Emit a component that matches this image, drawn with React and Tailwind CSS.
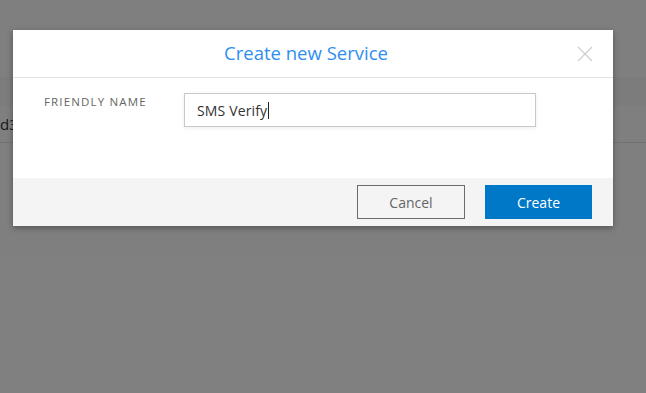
import React from 'react';

const App = () => {
  return (
    <div className="relative w-[646px] h-[393px] overflow-hidden bg-white" style={{ fontFamily: '"Open Sans", "Noto Sans", sans-serif' }}>
      {/* page behind the overlay */}
      <div className="flex flex-col">
        <div className="h-[77px]" />
        <div className="h-[29px] bg-[#f9f9f9]" />
        <div className="h-[37px] border-b border-[#e4e4e4] flex items-center">
          <span className="text-[15px] text-[#333]">d3</span>
        </div>
      </div>

      {/* overlay + dialog */}
      <div className="absolute inset-0 bg-black/50 pt-[30px] pl-[13px]">
        <div className="w-[600px] bg-white shadow-[0_2px_6px_rgba(0,0,0,0.35)]">
          <div className="relative h-[48px] border-b border-[#e3e3e3] flex items-center justify-center">
            <h2 className="text-[18.5px] text-[#2e8ef0] leading-none -ml-[14px]">Create new Service</h2>
            <button className="absolute right-[20px] top-[16px] w-[16px] h-[16px] text-[#cfcfcf]">
              <svg viewBox="0 0 16 16" width="16" height="16" fill="none" stroke="currentColor" strokeWidth="1.3">
                <path d="M1 1 L15 15 M15 1 L1 15" />
              </svg>
            </button>
          </div>
          <div className="h-[100px] flex items-start pt-[15px] pl-[31px]">
            <label className="w-[140px] text-[11.5px] tracking-[0.1em] text-[#666] uppercase">Friendly Name</label>
            <div className="w-[352px] h-[34px] border border-[#c8c8c8] shadow-[0_1px_4px_rgba(0,0,0,0.08)] flex items-center pl-[12px]">
              <span className="text-[14px] tracking-[0.01em] text-[#333]">SMS Verify</span>
              <span className="w-px h-[17px] bg-[#222] ml-[1px]" />
            </div>
          </div>
          <div className="h-[48px] bg-[#f4f4f4] flex justify-end items-start pt-[7px] pr-[21px] gap-[20px]">
            <button className="w-[108px] h-[34px] border border-[#6b6b6b] text-[14px] text-[#666] bg-transparent">Cancel</button>
            <button className="w-[107px] h-[34px] bg-[#0078c8] text-[14px] text-white">Create</button>
          </div>
        </div>
      </div>
    </div>
  );
};

export default App;
